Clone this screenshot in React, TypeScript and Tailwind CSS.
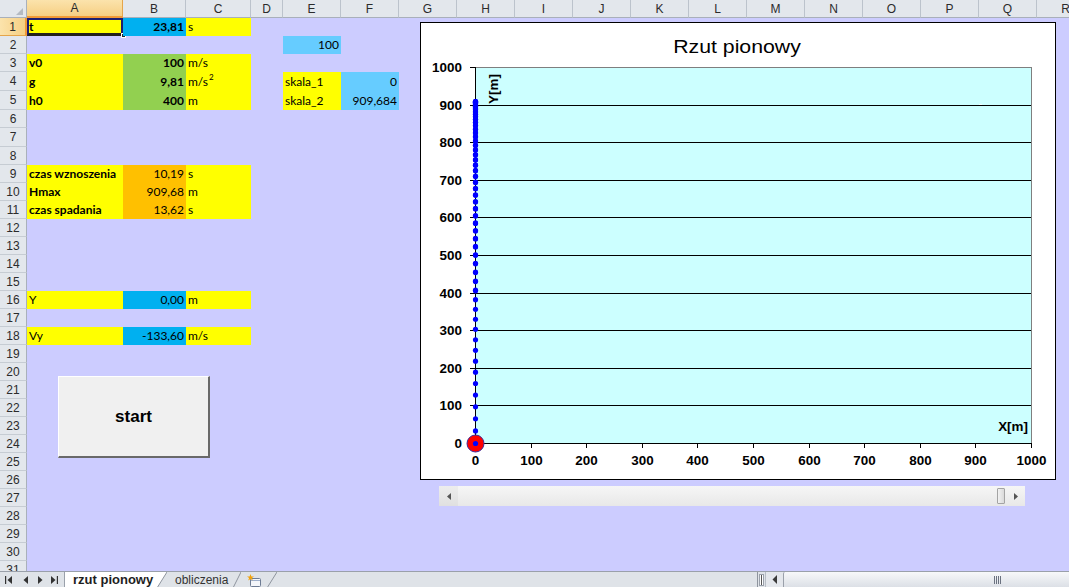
import React from "react";

type Cell = { t: React.ReactNode; bg?: string; b?: boolean; r?: boolean };

const YEL = "bg-[#FFFF00]";
const BLU = "bg-[#00B0F0]";
const GRN = "bg-[#92D050]";
const LBL = "bg-[#66CCFF]";
const ORG = "bg-[#FFC000]";

const COLS = [
  { id: "A", w: "w-[96px]" },
  { id: "B", w: "w-[63px]" },
  { id: "C", w: "w-[65px]" },
  { id: "D", w: "w-[32px]" },
  { id: "E", w: "w-[58px]" },
  { id: "F", w: "w-[58px]" },
  { id: "G", w: "w-[58px]" },
  { id: "H", w: "w-[58px]" },
  { id: "I", w: "w-[58px]" },
  { id: "J", w: "w-[58px]" },
  { id: "K", w: "w-[58px]" },
  { id: "L", w: "w-[58px]" },
  { id: "M", w: "w-[58px]" },
  { id: "N", w: "w-[58px]" },
  { id: "O", w: "w-[58px]" },
  { id: "P", w: "w-[58px]" },
  { id: "Q", w: "w-[58px]" },
  { id: "R", w: "w-[58px]" },
];

const DATA: Record<number, Record<string, Cell>> = {
  1: {
    A: { t: "t", bg: YEL, b: true },
    B: { t: "23,81", bg: BLU, b: true, r: true },
    C: { t: "s", bg: YEL },
  },
  2: { E: { t: "100", bg: LBL, r: true } },
  3: {
    A: { t: "v0", bg: YEL, b: true },
    B: { t: "100", bg: GRN, b: true, r: true },
    C: { t: "m/s", bg: YEL },
  },
  4: {
    A: { t: "g", bg: YEL, b: true },
    B: { t: "9,81", bg: GRN, b: true, r: true },
    C: {
      t: (
        <span>
          m/s<sup className="text-[8px] relative -top-[6px] ml-[1px]">2</sup>
        </span>
      ),
      bg: YEL,
    },
    E: { t: "skala_1", bg: YEL },
    F: { t: "0", bg: LBL, r: true },
  },
  5: {
    A: { t: "h0", bg: YEL, b: true },
    B: { t: "400", bg: GRN, b: true, r: true },
    C: { t: "m", bg: YEL },
    E: { t: "skala_2", bg: YEL },
    F: { t: "909,684", bg: LBL, r: true },
  },
  9: {
    A: { t: "czas wznoszenia", bg: YEL, b: true },
    B: { t: "10,19", bg: ORG, r: true },
    C: { t: "s", bg: YEL },
  },
  10: {
    A: { t: "Hmax", bg: YEL, b: true },
    B: { t: "909,68", bg: ORG, r: true },
    C: { t: "m", bg: YEL },
  },
  11: {
    A: { t: "czas spadania", bg: YEL, b: true },
    B: { t: "13,62", bg: ORG, r: true },
    C: { t: "s", bg: YEL },
  },
  16: {
    A: { t: "Y", bg: YEL },
    B: { t: "0,00", bg: BLU, r: true },
    C: { t: "m", bg: YEL },
  },
  18: {
    A: { t: "Vy", bg: YEL },
    B: { t: "-133,60", bg: BLU, r: true },
    C: { t: "m/s", bg: YEL },
  },
};

const ROWS = Array.from({ length: 31 }, (_, i) => i + 1);
const rowH = (r: number) => (r === 4 || r === 5 || r === 7 ? "h-[19px]" : "h-[18px]");

const HDR_FONT = "font-['Liberation_Sans',Arial,sans-serif]";

function CellView({ w, cell, selected }: { w: string; cell?: Cell; selected?: boolean }) {
  return (
    <div
      className={`${w} shrink-0 h-full relative flex items-end pb-[2px] px-[2px] text-[12px] leading-[14px] text-black whitespace-nowrap ${
        cell?.bg ?? ""
      } ${cell?.r ? "justify-end" : ""} ${cell?.b ? "font-bold" : ""}`}
    >
      {cell?.t}
      {selected && (
        <>
          <div className="absolute inset-0 border-2 border-[#1E1E6E] border-b-[3px] border-b-[#23201A]" />
          <div className="absolute -right-[3px] -bottom-[2px] w-[5px] h-[5px] bg-[#2A2A2A] border border-white" />
        </>
      )}
    </div>
  );
}

const X0 = 54;
const Y0 = 420;
const SX = 0.556;
const SY = 0.376;

function T({
  x,
  y,
  children,
  anchor = "middle",
  size = 12,
  weight = 700,
  rotate = 0,
}: {
  x: number;
  y: number;
  children: React.ReactNode;
  anchor?: "start" | "middle" | "end";
  size?: number;
  weight?: number;
  rotate?: number;
}) {
  return (
    <text
      transform={`translate(${x} ${y}) rotate(${rotate}) scale(1.12 1)`}
      textAnchor={anchor}
      fontSize={size}
      fontWeight={weight}
      fontFamily="'Liberation Sans', Arial, sans-serif"
      fill="#000"
    >
      {children}
    </text>
  );
}

function Chart() {
  const ticks = [0, 100, 200, 300, 400, 500, 600, 700, 800, 900, 1000];
  const pts: number[] = [];
  for (let k = 0; k < 200; k++) {
    const t = 23.81 - k * 0.25;
    if (t < 0) break;
    pts.push(400 + 100 * t - 4.905 * t * t);
  }
  const yy = (v: number) => Math.round(Y0 - v * SY) + 0.5;
  const xx = (v: number) => Math.round(X0 + v * SX) + 0.5;
  return (
    <svg width={634} height={456} className="block">
      <T x={316} y={30} size={19} weight={400}>
        Rzut pionowy
      </T>
      <rect x={54.5} y={44.5} width={556} height={376} fill="#CCFFFF" stroke="#7F7F7F" strokeWidth={1} />
      {ticks.slice(1, 10).map((v) => (
        <line key={v} x1={54} x2={610} y1={yy(v)} y2={yy(v)} stroke="#000" strokeWidth={1} />
      ))}
      <rect x={558} y={81} width={3} height={1} fill="#FFFFFF" opacity={0.8} />
      <line x1={54.5} x2={54.5} y1={44} y2={421} stroke="#000" />
      <line x1={54} x2={611} y1={420.5} y2={420.5} stroke="#000" />
      {ticks.map((v) => (
        <line key={"yt" + v} x1={49} x2={54} y1={yy(v)} y2={yy(v)} stroke="#000" />
      ))}
      {ticks.map((v) => (
        <line key={"xt" + v} x1={xx(v)} x2={xx(v)} y1={420} y2={425} stroke="#000" />
      ))}
      {ticks.map((v) => (
        <T key={"yl" + v} x={41} y={yy(v) + 4.5} anchor="end">
          {v}
        </T>
      ))}
      {ticks.map((v) => (
        <T key={"xl" + v} x={xx(v)} y={442}>
          {v}
        </T>
      ))}
      <T x={607} y={408} anchor="end">
        X[m]
      </T>
      <T x={76.5} y={66} rotate={-90}>
        Y[m]
      </T>
      {pts.map((p, i) => (
        <circle key={i} cx={54.5} cy={Y0 - p * SY + 0.5} r={2.6} fill="#0000FF" />
      ))}
      <circle cx={54.5} cy={420.5} r={8.5} fill="#FF0000" stroke="#3A2A9A" strokeWidth={1} />
      <circle cx={54.5} cy={420.5} r={2.6} fill="#0000FF" />
    </svg>
  );
}

function NavArrow({ dir, bar }: { dir: "l" | "r"; bar?: boolean }) {
  return (
    <svg width={8} height={8} viewBox="0 0 8 8" className="block">
      {dir === "l" ? (
        <>
          {bar && <rect x={0} y={0} width={1.2} height={8} fill="#333" />}
          <polygon points={bar ? "7,0 7,8 2.5,4" : "6,0 6,8 1.5,4"} fill="#333" />
        </>
      ) : (
        <>
          <polygon points={bar ? "1,0 1,8 5.5,4" : "2,0 2,8 6.5,4"} fill="#333" />
          {bar && <rect x={6.8} y={0} width={1.2} height={8} fill="#333" />}
        </>
      )}
    </svg>
  );
}

function Slant({ w, white }: { w: number; white?: boolean }) {
  return (
    <svg width={w} height={16} className="block shrink-0">
      {white && <polygon points={`0,0 ${w},0 0,16`} fill="#FFFFFF" />}
      <line x1={0} y1={16} x2={w} y2={0} stroke="#8E949E" strokeWidth={1} />
    </svg>
  );
}

export default function App() {
  return (
    <div
      className={`w-[1069px] h-[587px] overflow-hidden relative bg-[#CCCCFF] flex flex-col font-['Lato','Liberation_Sans',Arial,sans-serif]`}
    >
      {/* column headers */}
      <div className={`h-[18px] shrink-0 flex ${HDR_FONT} text-[12px] text-[#2B2B2B]`}>
        <div className="w-[27px] shrink-0 bg-[#E3E7EC] border-r border-b border-[#A9B0BA] relative">
          <svg width={26} height={17} className="absolute left-0 top-0">
            <polygon points="16,15 23,15 23,8" fill="#B4BAC2" />
          </svg>
        </div>
        {COLS.map((c) => (
          <div
            key={c.id}
            className={`${c.w} shrink-0 flex items-center justify-center border-r ${
              c.id === "A"
                ? "bg-linear-to-b from-[#FBE3AC] to-[#F6CF83] border-[#E5A54A] border-b-2 border-b-[#F29A36]"
                : "bg-[#E3E7EC] border-[#BCC3CC] border-b border-b-[#A9B0BA]"
            }`}
          >
            {c.id}
          </div>
        ))}
      </div>

      {/* body */}
      <div className="flex-1 overflow-hidden">
        {ROWS.map((r) => (
          <div key={r} className={`flex ${rowH(r)}`}>
            <div
              className={`w-[27px] shrink-0 flex items-center justify-center border-b ${HDR_FONT} text-[12px] text-[#2B2B2B] ${
                r === 1
                  ? "bg-linear-to-r from-[#FBE3AC] to-[#F6CF83] border-b-[#E5A54A] border-r-2 border-r-[#F29A36]"
                  : "bg-[#E3E7EC] border-b-[#C6CCD3] border-r border-r-[#A9B0BA]"
              }`}
            >
              {r}
            </div>
            {COLS.slice(0, 6).map((c) => (
              <CellView key={c.id} w={c.w} cell={DATA[r]?.[c.id]} selected={r === 1 && c.id === "A"} />
            ))}
          </div>
        ))}
      </div>

      {/* sheet tabs + horizontal scroll */}
      <div className={`h-[16px] shrink-0 border-t border-[#9AA0AA] bg-[#DFE3E8] flex items-stretch ${HDR_FONT}`}>
        <div className="w-[64px] shrink-0 flex items-center pl-[5px] gap-[0px]">
          <div className="w-[17px]">
            <NavArrow dir="l" bar />
          </div>
          <div className="w-[14px]">
            <NavArrow dir="l" />
          </div>
          <div className="w-[14px]">
            <NavArrow dir="r" />
          </div>
          <div className="w-[10px]">
            <NavArrow dir="r" bar />
          </div>
        </div>
        <div className="w-[93px] shrink-0 bg-white border-l border-[#9AA0AA] pl-[8px] font-bold text-[13px] leading-[16px] text-[#1E1E1E] whitespace-nowrap">
          rzut pionowy
        </div>
        <Slant w={10} white />
        <div className="w-[66px] shrink-0 pl-[8px] text-[12px] leading-[16px] text-[#333] whitespace-nowrap">
          obliczenia
        </div>
        <Slant w={8} />
        <div className="w-[26px] shrink-0 flex items-end pl-[6px]">
          <svg width={15} height={13} viewBox="0 0 15 13" className="block">
            <rect x={3.5} y={4.5} width={10} height={8} fill="#F4F6FA" stroke="#6E7C94" strokeWidth={1} rx={1} />
            <line x1={4} y1={6.5} x2={13} y2={6.5} stroke="#9FB0CC" />
            <polygon points="3.5,0 4.4,2.4 7,2.5 4.9,3.9 5.8,6.5 3.5,5 1.2,6.5 2.1,3.9 0,2.5 2.6,2.4" fill="#F2A20A" />
          </svg>
        </div>
        <Slant w={10} />
        <div className="flex-1" />
        <div className="w-[8px] shrink-0 flex items-center justify-center border-l border-[#8E949E]">
          <div className="w-[5px] h-[12px] bg-white border border-[#9AA0AA] flex justify-center">
            <div className="w-[1px] h-full bg-[#555]" />
          </div>
        </div>
        <div className="w-[18px] shrink-0 flex items-center justify-center bg-[#E4E7EC] border-l border-[#B9BEC6]">
          <svg width={6} height={9} className="block">
            <polygon points="5,0 5,9 0.5,4.5" fill="#3A3A3A" />
          </svg>
        </div>
        <div className="flex-1 max-w-[286px] border-l border-[#9AA0AA] bg-linear-to-b from-[#F7F8FA] to-[#DCE0E6] rounded-tl-[2px] relative">
          <div className="absolute left-[210px] top-[4px] flex gap-[1px]">
            <div className="w-[1px] h-[8px] bg-[#6B7280]" />
            <div className="w-[1px] h-[8px] bg-[#6B7280]" />
            <div className="w-[1px] h-[8px] bg-[#6B7280]" />
            <div className="w-[1px] h-[8px] bg-[#6B7280]" />
          </div>
        </div>
      </div>

      {/* start button (form control over cells) */}
      <div className="absolute left-[58px] top-[376px] w-[152px] h-[82px] bg-[#F0F0F0] border-t border-l border-white border-r-2 border-b-2 border-r-[#696969] border-b-[#696969] flex items-center justify-center font-['Liberation_Sans',Arial,sans-serif] font-bold text-[17px] text-black">
        start
      </div>

      {/* chart object */}
      <div className="absolute left-[420px] top-[22px] w-[636px] h-[458px] border border-black bg-white">
        <Chart />
      </div>

      {/* scrollbar form control */}
      <div className="absolute left-[439px] top-[486px] w-[586px] h-[20px] bg-linear-to-b from-[#F6F6F6] to-[#E8E8E8] flex items-center">
        <div className="w-[19px] h-full flex items-center justify-center bg-linear-to-b from-[#EDEDED] to-[#E0E0E0]">
          <svg width={4} height={7} className="block">
            <polygon points="4,0 4,7 0,3.5" fill="#555" />
          </svg>
        </div>
        <div className="flex-1" />
        <div className="absolute left-[558px] top-[2px] w-[8px] h-[16px] border border-[#A4A4A4] bg-linear-to-r from-[#F2F2F2] to-[#DADADA] rounded-[1px]" />
        <div className="w-[19px] h-full flex items-center justify-center">
          <svg width={4} height={7} className="block">
            <polygon points="0,0 0,7 4,3.5" fill="#555" />
          </svg>
        </div>
      </div>
    </div>
  );
}
